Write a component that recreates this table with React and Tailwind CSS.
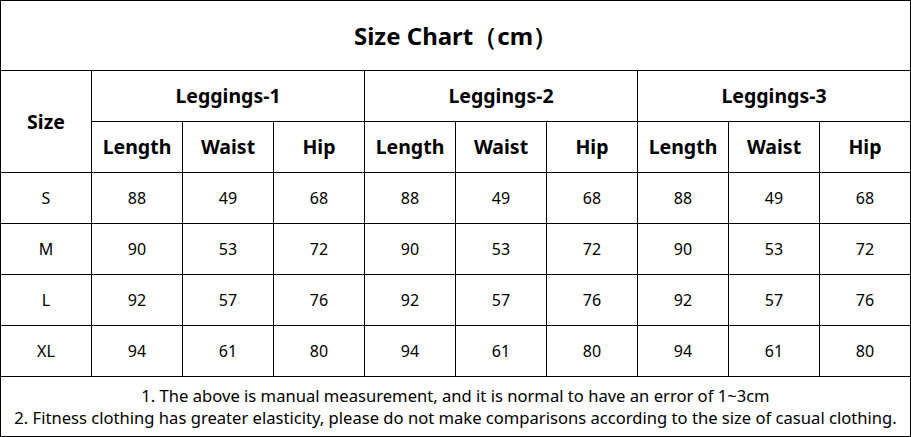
import React from 'react';

const groups = ['Leggings-1', 'Leggings-2', 'Leggings-3'];
const rows = [
  ['S', 88, 49, 68],
  ['M', 90, 53, 72],
  ['L', 92, 57, 76],
  ['XL', 94, 61, 80],
];

const cell = 'flex items-center justify-center border-r border-b border-black';

export default function App() {
  return (
    <div className="w-[911px] h-[437px] bg-white text-black" style={{ fontFamily: '"Noto Sans", "Open Sans", sans-serif' }}>
      <div className="grid grid-cols-[repeat(10,91px)] grid-rows-[70px_repeat(6,51px)_60px] border-l border-t border-black">
        <div className={`${cell} col-span-10 text-[24px] font-bold`}>Size Chart（cm）</div>

        <div className={`${cell} row-span-2 text-[19.5px] font-bold`}>Size</div>
        {groups.map((g) => (
          <div key={g} className={`${cell} col-span-3 text-[19.5px] font-bold`}>{g}</div>
        ))}
        {groups.map((g) =>
          ['Length', 'Waist', 'Hip'].map((h) => (
            <div key={g + h} className={`${cell} text-[19.5px] font-bold`}>{h}</div>
          ))
        )}

        {rows.map(([size, len, waist, hip]) => (
          <React.Fragment key={size}>
            <div className={`${cell} text-[16px]`}>{size}</div>
            {groups.map((g) => (
              <React.Fragment key={g}>
                <div className={`${cell} text-[16px]`}>{len}</div>
                <div className={`${cell} text-[16px]`}>{waist}</div>
                <div className={`${cell} text-[16px]`}>{hip}</div>
              </React.Fragment>
            ))}
          </React.Fragment>
        ))}

        <div className={`${cell} col-span-10 flex-col text-[16.6px] leading-[22px]`}>
          <p>1. The above is manual measurement, and it is normal to have an error of 1~3cm</p>
          <p>2. Fitness clothing has greater elasticity, please do not make comparisons according to the size of casual clothing.</p>
        </div>
      </div>
    </div>
  );
}
